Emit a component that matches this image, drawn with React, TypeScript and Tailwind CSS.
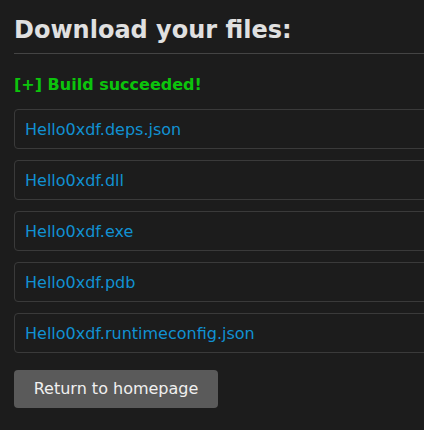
const files = [
  "Hello0xdf.deps.json",
  "Hello0xdf.dll",
  "Hello0xdf.exe",
  "Hello0xdf.pdb",
  "Hello0xdf.runtimeconfig.json",
];

export default function App() {
  return (
    <div className="min-h-[430px] w-full overflow-hidden bg-[#1c1c1c] font-['DejaVu_Sans',sans-serif]">
      <div className="w-[480px] pl-[14px] pt-[15px]">
        <h1 className="text-[24px] font-bold leading-[30px] text-[#e0e0e0]">Download your files:</h1>
        <hr className="mt-[8px] border-t border-[#444]" />
        <p className="mt-[21px] text-[16px] font-bold leading-[20px] text-[#0cc40c]">[+] Build succeeded!</p>
        <div className="mt-[14px] flex flex-col gap-[11px]">
          {files.map((f) => (
            <a
              key={f}
              href="#"
              className="flex h-[40px] items-center rounded-[4px] border border-[#3a3a3a] px-[10px] pt-[1px] text-[16px] text-[#1191d2]"
            >
              {f}
            </a>
          ))}
        </div>
        <button className="mt-[17px] h-[38px] w-[204px] rounded-[4px] bg-[#5a5a5a] text-[16px] text-[#f0f0f0]">
          Return to homepage
        </button>
      </div>
    </div>
  );
}
